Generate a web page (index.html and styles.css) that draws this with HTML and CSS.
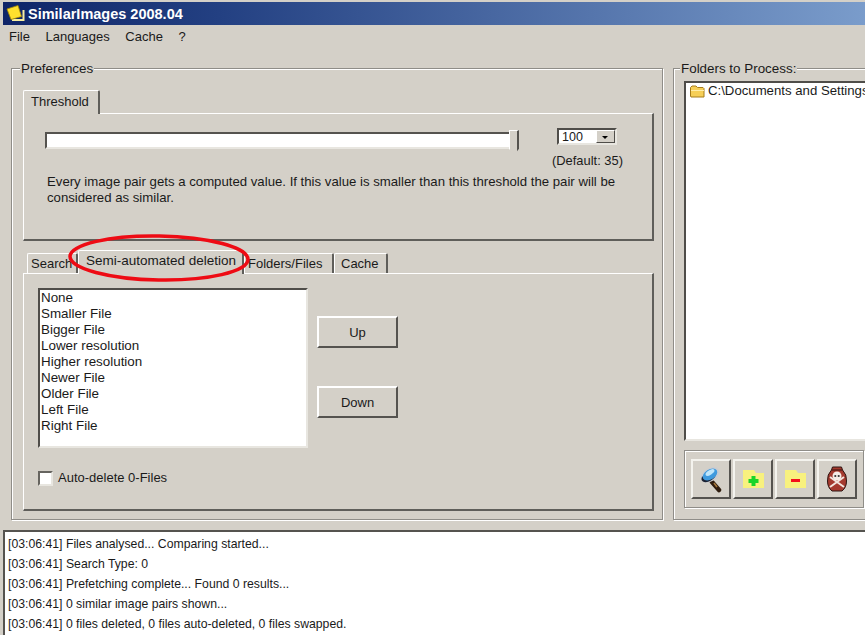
FILE: index.html
```html
<!DOCTYPE html>
<html lang="en">
<head>
<meta charset="utf-8">
<title>SimilarImages 2008.04</title>
<link rel="stylesheet" href="styles.css">
</head>
<body>
<div class="window">
  <header class="titlebar">
    <svg class="app-icon" width="19" height="19" viewBox="0 0 19 19"><path d="M6 16h11.500V6" fill="none" stroke="#f7eea0" stroke-width="2"/><path d="M1 5 12 1.500l3.500 11L5 15.500z" fill="#ffe02e" stroke="#a88a00" stroke-width=".8"/></svg>
    <span class="title-text">SimilarImages 2008.04</span>
  </header>
  <nav class="menubar"><span>File</span><span>Languages</span><span>Cache</span><span>?</span></nav>
  <main class="content">
    <section class="group prefs">
      <span class="group-label">Preferences</span>
      <div class="tabs tabs-top"><span class="tab tab-first tab-active">Threshold</span></div>
      <div class="panel threshold-panel">
        <div class="slider-row">
          <div class="slider"><div class="slider-thumb"></div></div>
          <div class="spin-col">
            <div class="combo"><span class="combo-value">100</span><span class="combo-btn"></span></div>
            <div class="default-note">(Default: 35)</div>
          </div>
        </div>
        <p class="desc">Every image pair gets a computed value. If this value is smaller than this threshold the pair will be considered as similar.</p>
      </div>
      <div class="tabs tabs-bottom">
        <span class="tab tab-search">Search</span>
        <span class="tab tab-active tab-semi">Semi-automated deletion</span>
        <span class="tab tab-folders">Folders/Files</span>
        <span class="tab tab-cache">Cache</span>
        <svg class="highlight" width="190" height="54" viewBox="0 0 190 54"><ellipse cx="91" cy="24" rx="89" ry="22" fill="none" stroke="#ee0b14" stroke-width="3.500" transform="rotate(1 91 24)"/></svg>
      </div>
      <div class="panel deletion-panel">
        <div class="list-row">
          <ul class="listbox">
            <li>None</li><li>Smaller File</li><li>Bigger File</li><li>Lower resolution</li><li>Higher resolution</li><li>Newer File</li><li>Older File</li><li>Left File</li><li>Right File</li>
          </ul>
          <div class="list-buttons">
            <button class="btn" type="button">Up</button>
            <button class="btn" type="button">Down</button>
          </div>
        </div>
        <label class="check"><span class="checkbox"></span>Auto-delete 0-Files</label>
      </div>
    </section>
    <section class="group folders">
      <span class="group-label folders-label">Folders to Process:</span>
      <div class="tree">
        <div class="tree-item">
          <svg width="17" height="15" viewBox="0 0 17 15"><path d="M1.500 12V3.500L3 2h4l1.500 1.500H14l1 1V13H2z" fill="#f6cf57" stroke="#a67c1c"/><path d="M2 6h13v1H2z" fill="#ffeeaa"/></svg>
          <span>C:\Documents and Settings\</span>
        </div>
      </div>
      <div class="toolbar">
        <button class="tool" type="button" aria-label="Search">
          <svg width="24" height="27" viewBox="0 0 24 27"><path d="M13 16l7 8" stroke="#2e1c0e" stroke-width="4.500" stroke-linecap="round"/><path d="M15 17l3 4" stroke="#a5773c" stroke-width="1.500"/><ellipse cx="11" cy="9" rx="10" ry="6.500" fill="#c9ccd2" transform="rotate(-32 11 9)"/><path d="M3 10.500Q1.500 15 5 16q6 1 11-5 2-3 1-5Q13 13 3 10.500z" fill="#1b2233"/><ellipse cx="11" cy="8.500" rx="8" ry="5" fill="#3f9ade" transform="rotate(-32 11 8.500)"/><ellipse cx="11" cy="6.500" rx="5" ry="2.300" fill="#bfe5fa" transform="rotate(-32 11 6.500)"/></svg>
        </button>
        <button class="tool" type="button" aria-label="Add folder">
          <svg width="21" height="18" viewBox="0 0 21 18"><path d="M0 18V0h11l2 3h8v15z" fill="#f8f17e"/><path d="M8.500 6h4v3h3v4h-3v3h-4v-3h-3V9h3z" fill="#18d528"/></svg>
        </button>
        <button class="tool" type="button" aria-label="Remove folder">
          <svg width="21" height="18" viewBox="0 0 21 18"><path d="M0 18V0h11l2 3h8v15z" fill="#f8f17e"/><rect x="6" y="9" width="9" height="3" fill="#f4101a"/></svg>
        </button>
        <button class="tool" type="button" aria-label="Delete">
          <svg width="20" height="26" viewBox="0 0 20 26"><path d="M5.500 1h9l1 3q4.500 4.500 4 11 0 6.500-4.500 10H5Q.5 21.500.5 15 0 8.500 4.500 4z" fill="#a53a2e" stroke="#2e1512"/><path d="M4.500 4h11" stroke="#5a1f18" stroke-width="1.500"/><path d="M3 21 17 11M3 11l14 10" stroke="#f2e6de" stroke-width="2"/><circle cx="10" cy="10" r="4.500" fill="#f5ece6"/><circle cx="8.300" cy="10" r="1.100" fill="#333"/><circle cx="11.700" cy="10" r="1.100" fill="#333"/></svg>
        </button>
      </div>
    </section>
  </main>
  <section class="log">
    <div>[03:06:41] Files analysed... Comparing started...</div>
    <div>[03:06:41] Search Type: 0</div>
    <div>[03:06:41] Prefetching complete... Found 0 results...</div>
    <div>[03:06:41] 0 similar image pairs shown...</div>
    <div>[03:06:41] 0 files deleted, 0 files auto-deleted, 0 files swapped.</div>
  </section>
</div>
</body>
</html>
```

FILE: styles.css
```css
* { box-sizing: border-box; }
html, body { margin: 0; padding: 0; height: 100%; overflow: hidden; }
body { background: #d4d0c8; color: #1a1a1a; font: 13px/16px "Liberation Sans", Arial, sans-serif; }
.window { width: 865px; height: 635px; display: flex; flex-direction: column; padding-top: 2px; overflow: hidden; }

.titlebar { height: 23px; margin-left: 3px; padding-left: 3px; display: flex; align-items: center; gap: 3px; background: linear-gradient(90deg, #0f2568 0%, #234082 25%, #7a9ccb 100%); color: #fff; flex: none; }
.title-text { font-weight: bold; font-size: 14.500px; }
.app-icon { flex: none; }

.menubar { height: 25px; padding: 4px 0 0 9px; display: flex; gap: 15.500px; flex: none; }

.content { height: 480px; padding: 18px 0 0 11px; display: flex; gap: 10px; flex: none; }

.group { position: relative; height: 452px; border: 1px solid #8f8d88; box-shadow: inset 1px 1px 0 #fff, 1px 1px 0 #fff; flex: none; }
.group-label { position: absolute; top: -8px; left: 8px; padding: 0 1px; background: #d4d0c8; font-size: 13.400px; }
.folders-label { left: 6px; }
.prefs { width: 652px; padding: 20px 8px 0 11px; }
.folders { width: 210px; padding: 12px 0 0 10px; }

.tabs { display: flex; align-items: flex-end; position: relative; }
.tabs-top { height: 24px; }
.tabs-bottom { height: 32px; padding-left: 4px; }
.tab { display: block; height: 20px; padding: 2px 6px 0; background: #d4d0c8; border-top: 1px solid #fff; border-left: 1px solid #fff; border-right: 2px solid #5f5e5a; border-radius: 2px 2px 0 0; white-space: nowrap; }
.tab-first { height: 24px; padding: 3px 7px 0; width: 77px; position: relative; z-index: 1; margin-bottom: -1px; }
.tab-search { width: 51px; padding-left: 3px; overflow: hidden; }
.tab-semi { width: 166px; height: 24px; padding: 2px 6px 0 7px; position: relative; z-index: 1; margin-bottom: -1px; font-size: 13.500px; }
.tab-folders { width: 90px; padding-left: 3px; }
.tab-cache { width: 54px; padding-left: 6px; }
.highlight { position: absolute; left: 45px; top: -7px; z-index: 2; pointer-events: none; }

.panel { border-top: 1px solid #fff; border-left: 1px solid #fff; border-right: 2px solid #5f5e5a; border-bottom: 2px solid #5f5e5a; }
.threshold-panel { height: 128px; padding: 0 0 0 21px; }
.deletion-panel { height: 238px; padding: 14px 0 0 14px; }

.slider-row { display: flex; height: 46px; padding-top: 14px; }
.slider { position: relative; width: 470px; height: 17px; margin-top: 4px; background: #fff; border: 2px solid; border-color: #55534f #e8e6e0 #e8e6e0 #55534f; }
.slider-thumb { position: absolute; right: -6px; top: -4px; width: 10px; height: 25px; background: #d4d0c8; border-right: 2px solid #55534f; border-top: 1px solid #fff; border-left: 1px solid #fff; clip-path: polygon(0 0, 100% 0, 100% 75%, 50% 100%, 0 75%); }
.spin-col { margin-left: 42px; width: 76px; }
.combo { width: 60px; height: 17px; display: flex; background: #fff; border: 2px solid; border-color: #4f4d49 #e8e6e0 #e8e6e0 #4f4d49; }
.combo-value { flex: 1; padding-left: 3px; line-height: 15px; font-size: 12.500px; }
.combo-btn { position: relative; width: 19px; background: #d4d0c8; border: 1px solid; border-color: #fff #4f4d49 #4f4d49 #fff; }
.combo-btn::after { content: ""; position: absolute; left: 5px; top: 5px; border: 3px solid transparent; border-top: 3px solid #000; border-bottom: 0; }
.default-note { margin-top: 8px; margin-left: -5px; white-space: nowrap; font-size: 12.900px; }
.desc { margin: 14px 20px 0 2px; font-size: 13.200px; line-height: 16px; }

.list-row { display: flex; height: 160px; }
.listbox { list-style: none; margin: 0; width: 270px; height: 160px; padding: 0 0 0 1px; background: #fff; border: 2px solid; border-color: #4f4d49 #e8e6e0 #e8e6e0 #4f4d49; font-size: 13.400px; }
.listbox li { height: 16px; line-height: 16px; }
.list-buttons { margin-left: 9px; padding-top: 28px; display: flex; flex-direction: column; gap: 38px; }
.btn { width: 81px; height: 32px; padding: 0; background: #d4d0c8; font: 13px "Liberation Sans", Arial, sans-serif; color: #1a1a1a; border: 2px solid; border-color: #fff #55534f #55534f #fff; }
.check { display: flex; align-items: center; gap: 5px; margin-top: 22px; }
.checkbox { width: 15px; height: 15px; background: #fff; border: 2px solid; border-color: #66645f #e8e6e0 #e8e6e0 #66645f; }

.tree { width: 200px; height: 360px; padding: 0 0 0 3px; background: #fff; border: 2px solid; border-color: #4f4d49 #e8e6e0 #e8e6e0 #4f4d49; overflow: hidden; }
.tree-item { display: flex; align-items: center; gap: 2px; white-space: nowrap; font-size: 13.200px; }
.toolbar { width: 180px; height: 58px; margin-top: 9px; padding: 8px 0 0 6px; display: flex; gap: 2px; border: 1px solid #8f8d88; box-shadow: inset 1px 1px 0 #fff, 1px 1px 0 #fff; }
.tool { width: 40px; height: 40px; padding: 0; display: flex; align-items: center; justify-content: center; background: #d4d0c8; border: 2px solid; border-color: #f4f3ee #55534f #55534f #f4f3ee; }

.log { flex: none; width: 870px; height: 110px; margin-left: 3px; padding: 2px 0 0 3px; background: #fff; border: 2px solid; border-color: #55534f #e8e6e0 #e8e6e0 #55534f; font-size: 12.250px; line-height: 20px; overflow: hidden; white-space: nowrap; }
```
